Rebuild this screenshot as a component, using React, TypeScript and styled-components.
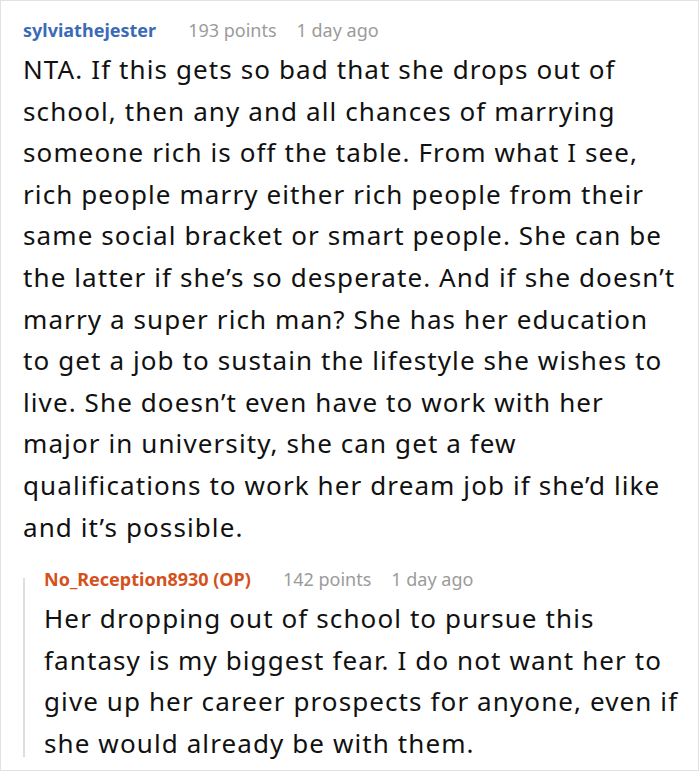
import React from "react";
import styled, { createGlobalStyle } from "styled-components";

const Global = createGlobalStyle`
  html, body { margin: 0; padding: 0; background: #fff; }
  body { font-family: "Noto Sans", "Open Sans", sans-serif; color: #111; }
`;

const Frame = styled.div`
  box-sizing: border-box;
  width: 699px;
  height: 771px;
  border: 1px solid #e2e2e2;
  padding: 17px 2px 0 22px;
  overflow: hidden;
`;

const Meta = styled.div`
  display: flex;
  align-items: baseline;
  font-size: 18px;
  line-height: 25px;
  white-space: nowrap;
`;

const Author = styled.span<{ $op?: boolean }>`
  font-weight: 700;
  color: ${(p) => (p.$op ? "#d4511c" : "#3b6bb7")};
  margin-right: 32px;
`;

const Info = styled.span`
  color: #9b9b9b;
  margin-right: 20px;
`;

const Body = styled.p<{ $inset: number }>`
  margin: 6px 0 0;
  padding-right: ${(p) => p.$inset}px;
  font-size: 26px;
  line-height: 41.6px;
  letter-spacing: 1.1px;
`;

const Reply = styled.div`
  display: flex;
  margin-top: 19px;
`;

const Thread = styled.div`
  width: 2px;
  margin: 11px 0 8px;
  background: #dedede;
  flex: none;
`;

const ReplyContent = styled.div`
  padding-left: 19px;
  flex: 1;
`;

type CommentProps = {
  author: string;
  op?: boolean;
  points: number;
  age: string;
  text: string;
  inset?: number;
};

const CommentView = ({ author, op, points, age, text, inset = 0 }: CommentProps) => (
  <>
    <Meta>
      <Author $op={op}>{author}</Author>
      <Info>{points} points</Info>
      <Info>{age}</Info>
    </Meta>
    <Body $inset={inset}>{text}</Body>
  </>
);

export default function App() {
  return (
    <>
      <Global />
      <Frame>
        <CommentView
          author="sylviathejester"
          points={193}
          age="1 day ago"
          inset={18}
          text="NTA. If this gets so bad that she drops out of school, then any and all chances of marrying someone rich is off the table. From what I see, rich people marry either rich people from their same social bracket or smart people. She can be the latter if she’s so desperate. And if she doesn’t marry a super rich man? She has her education to get a job to sustain the lifestyle she wishes to live. She doesn’t even have to work with her major in university, she can get a few qualifications to work her dream job if she’d like and it’s possible."
        />
        <Reply>
          <Thread />
          <ReplyContent>
            <CommentView
              author="No_Reception8930 (OP)"
              op
              points={142}
              age="1 day ago"
              text="Her dropping out of school to pursue this fantasy is my biggest fear. I do not want her to give up her career prospects for anyone, even if she would already be with them."
            />
          </ReplyContent>
        </Reply>
      </Frame>
    </>
  );
}
